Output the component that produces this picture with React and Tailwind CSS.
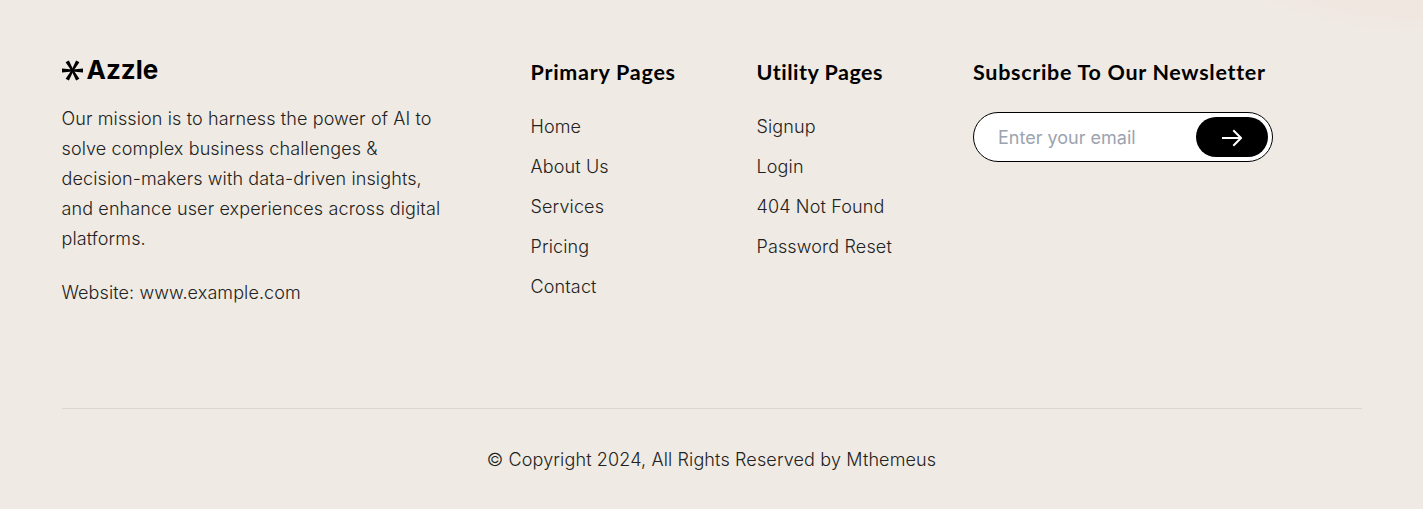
const columns = [
  { title: 'Primary Pages', links: ['Home', 'About Us', 'Services', 'Pricing', 'Contact'], width: 'w-[226px]', tracking: 'tracking-[0.75px]' },
  { title: 'Utility Pages', links: ['Signup', 'Login', '404 Not Found', 'Password Reset'], width: 'w-[216.5px]', tracking: 'tracking-[0.5px]' },
];

const heading = "font-['Lato','Open_Sans',sans-serif] text-[21.5px] leading-7 font-bold whitespace-nowrap text-black";

function Logo() {
  return (
    <a href="#" className="flex h-6 items-center gap-1 text-black">
      <svg className="h-[21px] w-[21px]" viewBox="0 0 21 21" fill="currentColor">
        {[0, 60, 120, 180, 240, 300].map((angle) => (
          <path key={angle} d="M10.5 9.5L21 8.6v3.8L10.5 11.5z" transform={`rotate(${angle} 10.5 10.5)`} />
        ))}
      </svg>
      <span className="text-[26px] leading-6 font-bold">Azzle</span>
    </a>
  );
}

export default function App() {
  return (
    <footer className="h-[509px] overflow-hidden bg-[#efeae3] bg-[radial-gradient(ellipse_240px_100px_at_1440px_-65px,#f0e6e0_0%,#f0e7e1_85%,#efeae3_100%)] px-[61.5px] font-['Inter',sans-serif] text-lg font-light text-[#222]">
      <div className="flex h-[408px] pt-[58px]">
        <div className="w-[469px]">
          <Logo />
          <p className="mt-[22px] w-[390px] leading-[30px] tracking-[0.12px]">
            Our mission is to harness the power of AI to solve complex business challenges &amp; decision-makers with data-driven insights, and enhance user experiences across digital platforms.
          </p>
          <p className="mt-6 leading-[30px] tracking-[0.1px]">Website: www.example.com</p>
        </div>
        {columns.map((column) => (
          <nav key={column.title} className={column.width}>
            <h3 className={`${heading} ${column.tracking}`}>{column.title}</h3>
            <ul className="mt-[26px] flex flex-col gap-[10px] leading-[30px] tracking-[0.13px]">
              {column.links.map((link) => (
                <li key={link}><a href="#">{link}</a></li>
              ))}
            </ul>
          </nav>
        ))}
        <div>
          <h3 className={`${heading} tracking-[0.7px]`}>Subscribe To Our Newsletter</h3>
          <form className="mt-[26px] flex h-[50px] w-[300px] items-center rounded-full border border-black bg-white pr-1 pl-6">
            <input className="w-0 flex-1 pt-px font-normal outline-none placeholder:text-[#9ca3af]" placeholder="Enter your email" />
            <button type="button" aria-label="Subscribe" className="flex h-10 w-[72px] items-center justify-center rounded-full bg-black text-white">
              <svg className="h-5 w-5" viewBox="0 0 20 20" fill="none" stroke="currentColor" strokeWidth="2" strokeLinecap="square" strokeLinejoin="miter">
                <path d="M1 11h17.5M12 4l7 7-7 7" />
              </svg>
            </button>
          </form>
        </div>
      </div>
      <div className="border-t border-[#dbd7d0] pt-[36px] text-center leading-[30px] tracking-[0.13px]">© Copyright 2024, All Rights Reserved by Mthemeus</div>
    </footer>
  );
}
